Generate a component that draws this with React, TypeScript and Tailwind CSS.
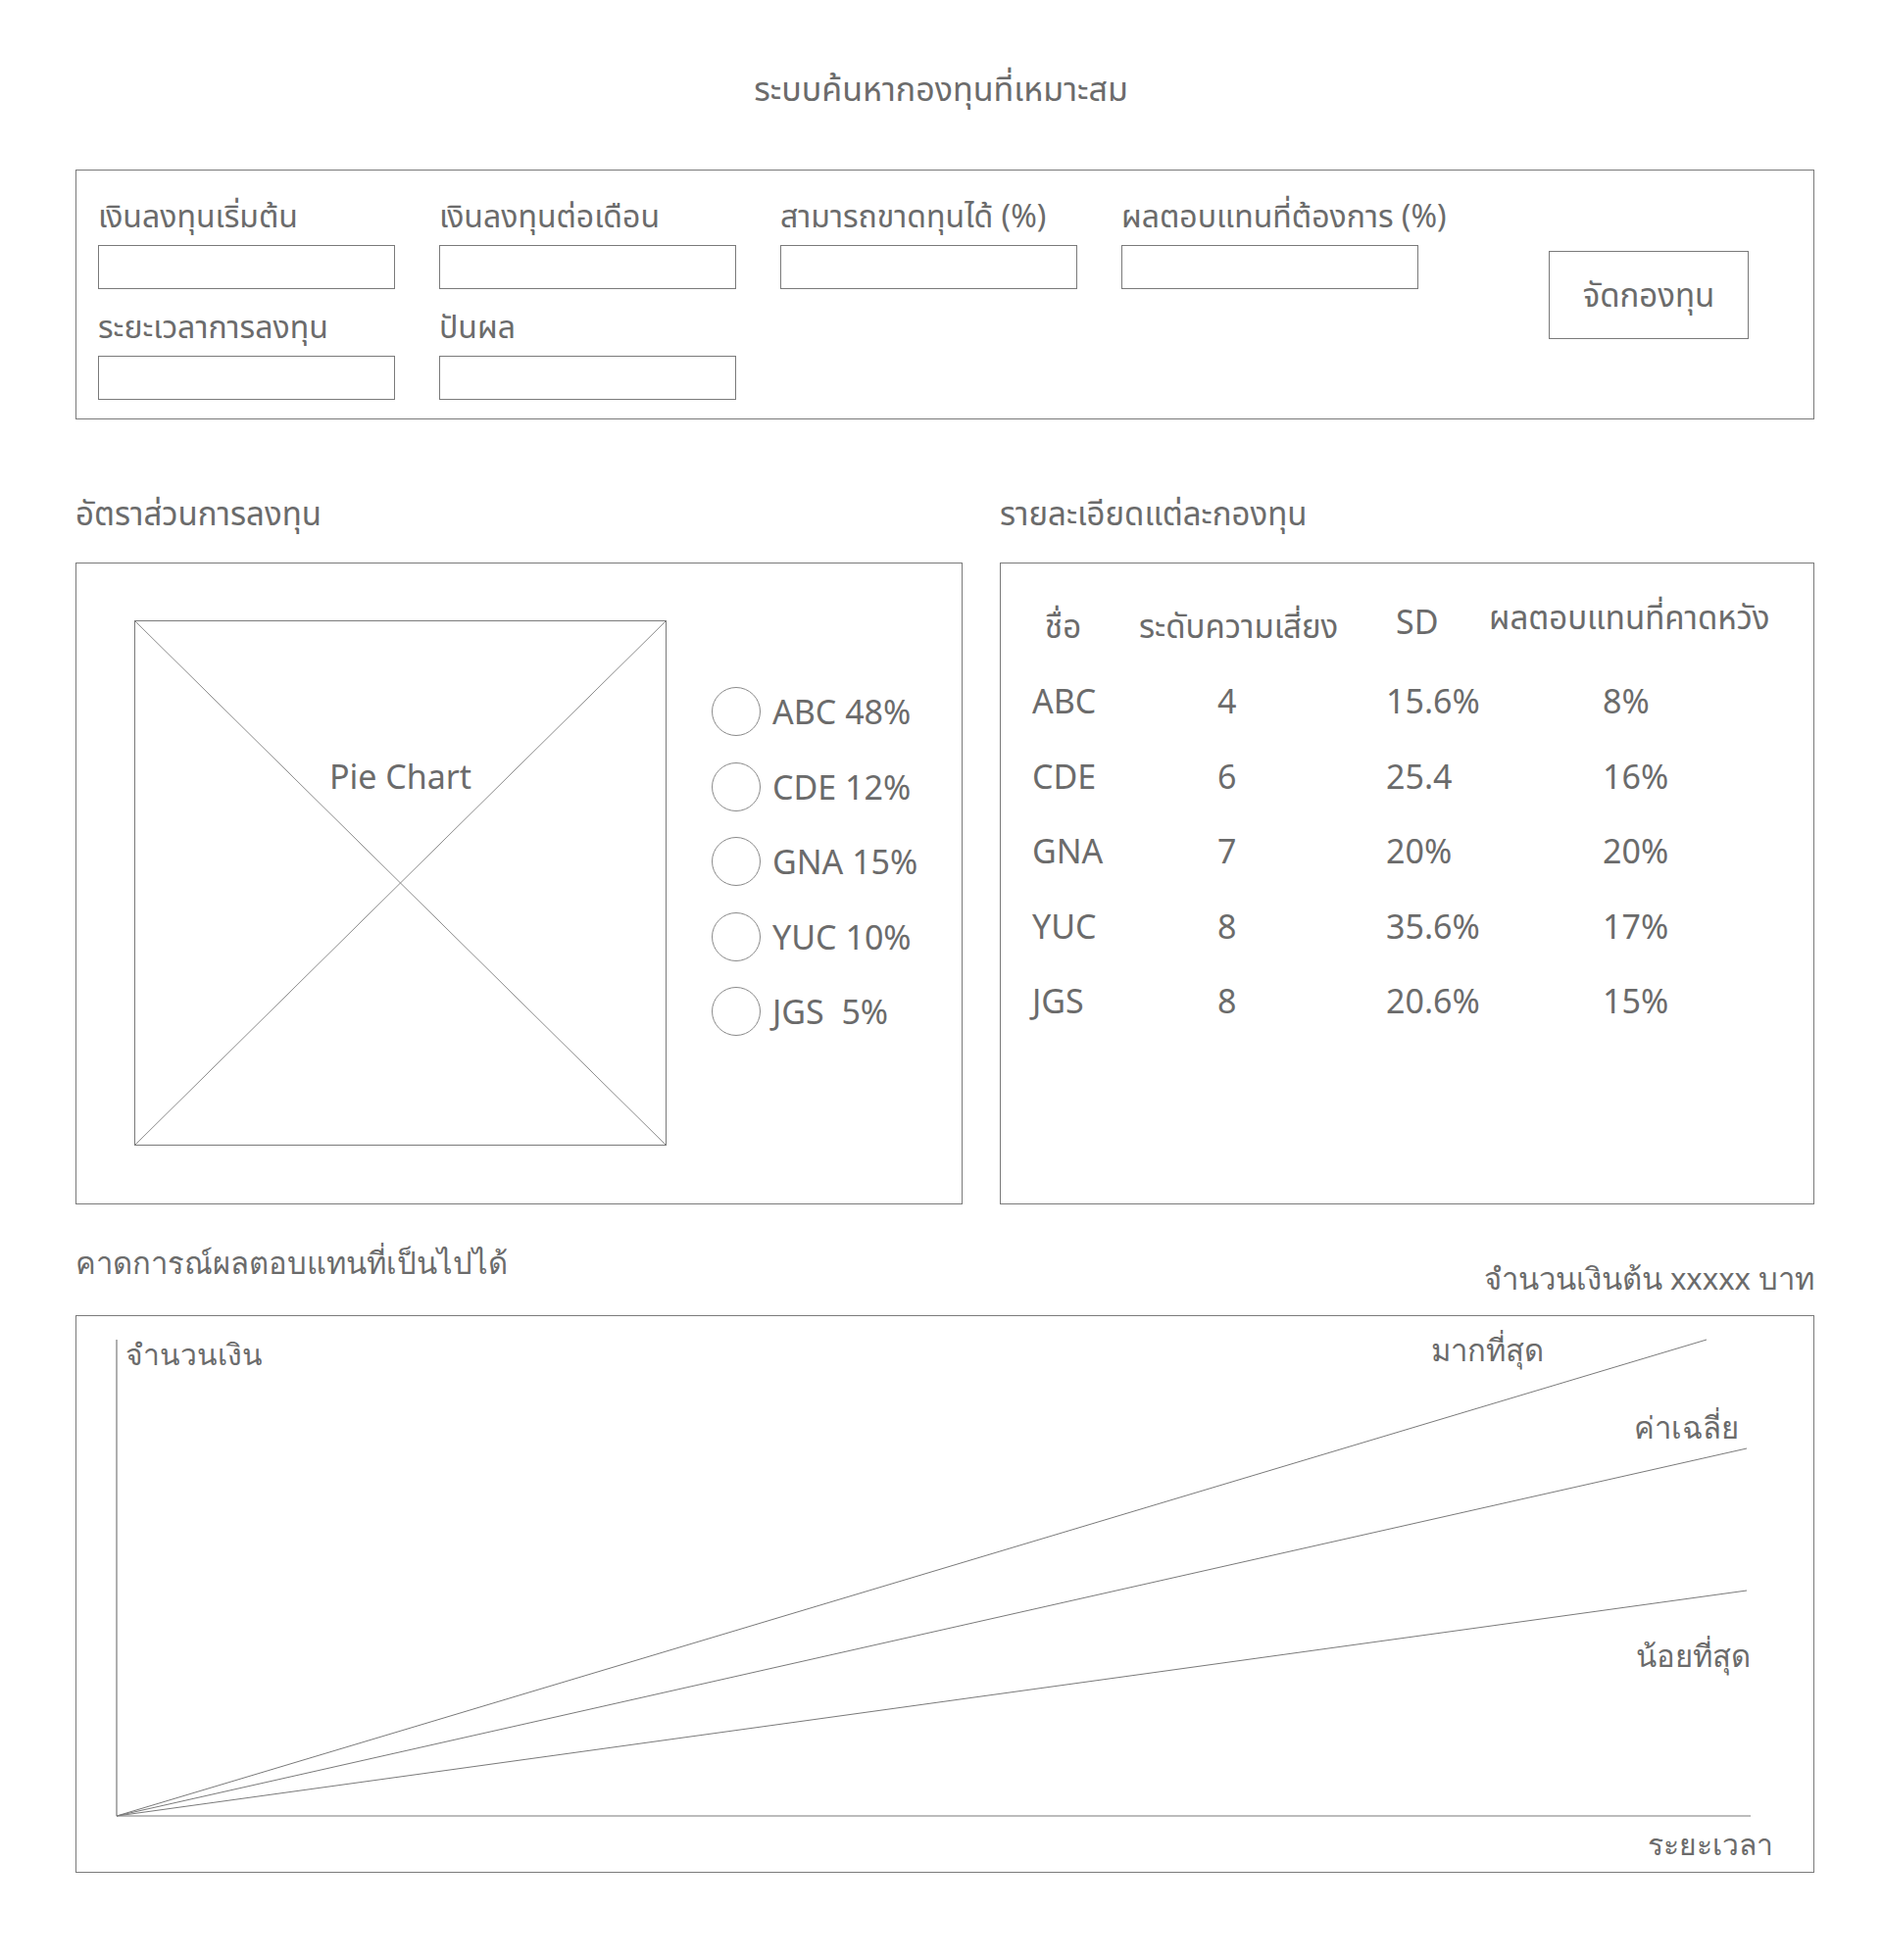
import React from 'react';

const legend = [
  { name: 'ABC', pct: '48%' },
  { name: 'CDE', pct: '12%' },
  { name: 'GNA', pct: '15%' },
  { name: 'YUC', pct: '10%' },
  { name: 'JGS ', pct: '5%' },
];

const funds = [
  { name: 'ABC', risk: '4', sd: '15.6%', ret: '8%' },
  { name: 'CDE', risk: '6', sd: '25.4', ret: '16%' },
  { name: 'GNA', risk: '7', sd: '20%', ret: '20%' },
  { name: 'YUC', risk: '8', sd: '35.6%', ret: '17%' },
  { name: 'JGS', risk: '8', sd: '20.6%', ret: '15%' },
];

// loopless thai, used for the form, headers and table
const plain = "font-['Noto_Sans','Noto_Sans_Thai',sans-serif]";

function Field({ label }: { label: string }) {
  return (
    <div className="flex flex-col">
      <span className={`${plain} h-[36px] leading-[36px] text-[32px] whitespace-nowrap`}>{label}</span>
      <div className="mt-[12px] h-[45px] w-[303px] border border-[#7a7a7a]" />
    </div>
  );
}

export default function App() {
  return (
    <div className="min-h-[2000px] w-[1920px] bg-white text-[#6b6b6b] font-['Noto_Sans','Open_Sans',sans-serif]">
      {/* title */}
      <div className={`${plain} pt-[70px] h-[173px] text-center text-[34px] leading-[40px]`}>
        ระบบค้นหากองทุนที่เหมาะสม
      </div>

      {/* search form */}
      <div className="ml-[77px] w-[1774px] h-[255px] border border-[#7a7a7a] flex items-start">
        <div className="pl-[22px] pt-[28px] grid content-start grid-cols-[303px_303px_303px_303px] gap-x-[45px]">
          <Field label="เงินลงทุนเริ่มต้น" />
          <Field label="เงินลงทุนต่อเดือน" />
          <Field label="สามารถขาดทุนได้ (%)" />
          <Field label="ผลตอบแทนที่ต้องการ (%)" />
          <div className="mt-[20px]">
            <Field label="ระยะเวลาการลงทุน" />
          </div>
          <div className="mt-[20px]">
            <Field label="ปันผล" />
          </div>
        </div>
        <div className="ml-auto mr-[66px] mt-[82px]">
          <button className={`${plain} w-[204px] h-[90px] border border-[#7a7a7a] text-[33px] text-[#6b6b6b]`}>
            จัดกองทุน
          </button>
        </div>
      </div>

      {/* allocation + details */}
      <div className="ml-[77px] w-[1774px] mt-[76px] flex gap-[38px]">
        <div className="w-[905px] flex flex-col">
          <div className={`${plain} h-[40px] leading-[40px] text-[33px]`}>อัตราส่วนการลงทุน</div>
          <div className="mt-[30px] h-[655px] border border-[#7a7a7a] flex items-start">
            <div className="ml-[59px] mt-[58px] relative w-[543px] h-[536px] border border-[#7a7a7a]">
              <svg className="absolute inset-0" width="541" height="534" viewBox="0 0 541 534">
                <line x1="0" y1="0" x2="541" y2="534" stroke="#8a8a8a" strokeWidth="1" />
                <line x1="541" y1="0" x2="0" y2="534" stroke="#8a8a8a" strokeWidth="1" />
              </svg>
              <div className="absolute left-0 right-0 top-[136px] text-center text-[34px] leading-[44px]">
                Pie Chart
              </div>
            </div>
            <div className="ml-[46px] mt-[113px] flex flex-col">
              {legend.map((l) => (
                <div key={l.name} className="h-[76.5px] flex items-center">
                  <div className="w-[50px] h-[50px] rounded-full border border-[#8a8a8a]" />
                  <span className="ml-[12px] text-[34px] leading-[44px] whitespace-pre">
                    {l.name} {l.pct}
                  </span>
                </div>
              ))}
            </div>
          </div>
        </div>

        <div className="w-[831px] flex flex-col">
          <div className={`${plain} h-[40px] leading-[40px] text-[33px]`}>รายละเอียดแต่ละกองทุน</div>
          <div className="mt-[30px] h-[655px] border border-[#7a7a7a] pl-[32px] pt-[35px]">
            <div className={`${plain} h-[67px] grid grid-cols-[112px_249px_107px_1fr] leading-[40px] whitespace-nowrap`}>
              <span className="pl-[13px] mt-[9px] text-[33px]">ชื่อ</span>
              <span className="-ml-[3px] mt-[9px] text-[33px]">ระดับความเสี่ยง</span>
              <span className="pl-[10px] mt-[4px] text-[34px]">SD</span>
              <span className="-ml-[2px] text-[33px]">ผลตอบแทนที่คาดหวัง</span>
            </div>
            {funds.map((f) => (
              <div
                key={f.name}
                className="h-[76.5px] grid grid-cols-[112px_249px_107px_1fr] items-center text-[34px] leading-[44px]"
              >
                <span>{f.name}</span>
                <span className="pl-[77px]">{f.risk}</span>
                <span>{f.sd}</span>
                <span className="pl-[114px]">{f.ret}</span>
              </div>
            ))}
          </div>
        </div>
      </div>

      {/* projection */}
      <div className="ml-[77px] w-[1774px] mt-[39px]">
        <div className="flex justify-between items-start">
          <span className="h-[40px] leading-[40px] text-[31px]">คาดการณ์ผลตอบแทนที่เป็นไปได้</span>
          <span className="mt-[16px] h-[40px] leading-[40px] text-[31px]">จำนวนเงินต้น xxxxx บาท</span>
        </div>
        <div className="mt-[18px] relative h-[569px] border border-[#7a7a7a]">
          <svg className="absolute inset-0" width="1772" height="567" viewBox="0 0 1772 567">
            <line x1="41" y1="24" x2="41" y2="510" stroke="#7a7a7a" strokeWidth="1.2" />
            <line x1="41" y1="510" x2="1708" y2="510" stroke="#7a7a7a" strokeWidth="1.2" />
            <line x1="41" y1="510" x2="1663" y2="24" stroke="#7a7a7a" strokeWidth="1" />
            <line x1="41" y1="510" x2="1704" y2="135" stroke="#7a7a7a" strokeWidth="1" />
            <line x1="41" y1="510" x2="1704" y2="280" stroke="#7a7a7a" strokeWidth="1" />
          </svg>
          <span className="absolute left-[50px] top-[19px] leading-[40px] text-[30px]">จำนวนเงิน</span>
          <span className="absolute left-[1382px] top-[14px] leading-[40px] text-[31px]">มากที่สุด</span>
          <span className="absolute left-[1589px] top-[93px] leading-[40px] text-[31px]">ค่าเฉลี่ย</span>
          <span className="absolute left-[1591px] top-[326px] leading-[40px] text-[31px]">น้อยที่สุด</span>
          <span className="absolute left-[1603px] top-[519px] leading-[40px] text-[30px]">ระยะเวลา</span>
        </div>
      </div>
    </div>
  );
}
